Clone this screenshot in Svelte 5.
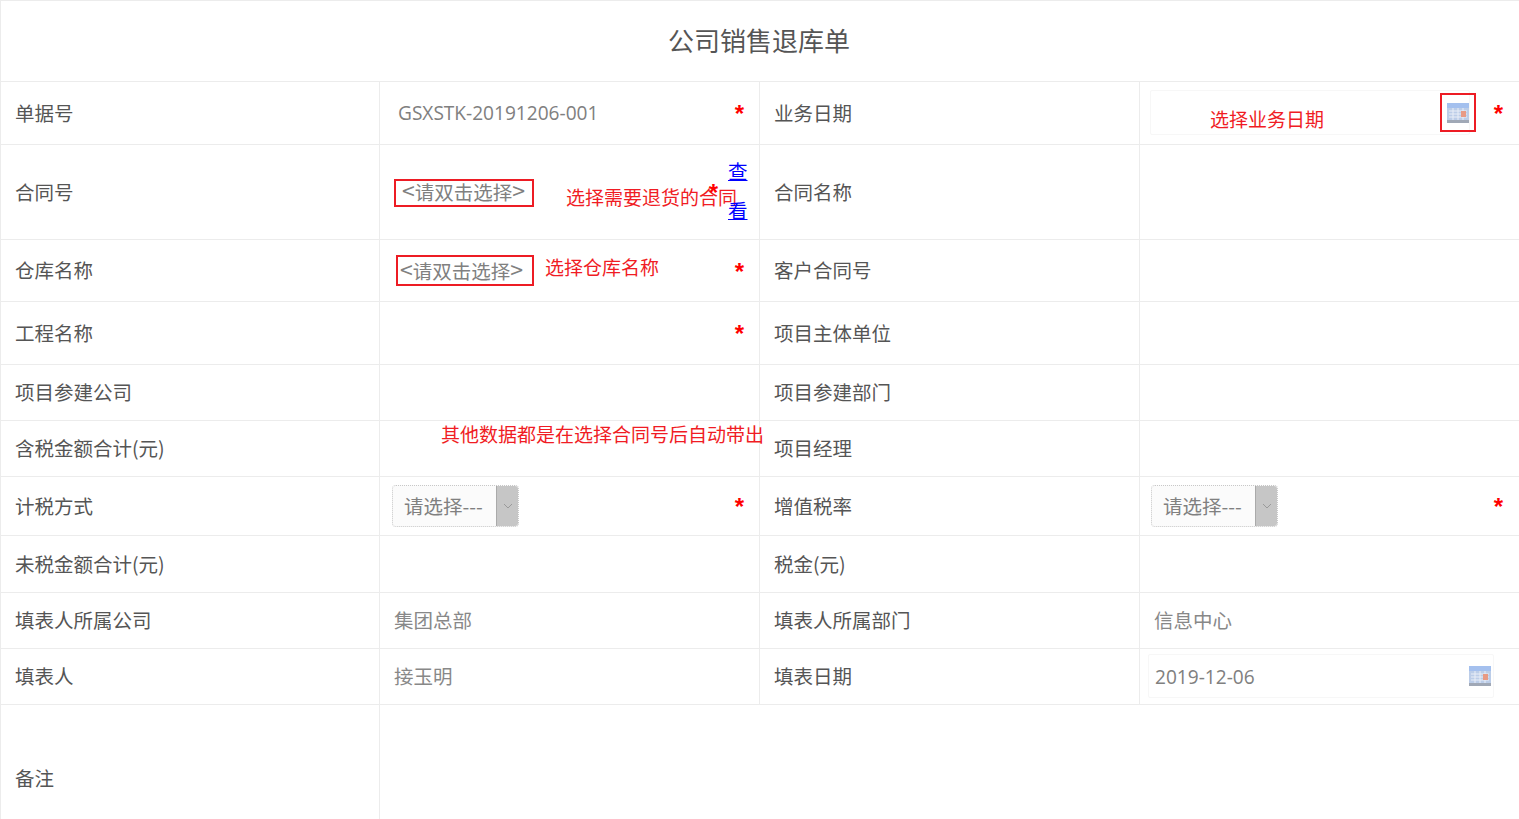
<script>
</script>

{#snippet calendar()}
  <svg class="cal" width="24" height="22" viewBox="0 0 24 22">
    <rect x="1" y="1" width="22" height="20" rx="1" fill="#bccde8" />
    <rect x="1" y="1" width="22" height="5" fill="#a4c0ee" />
    <rect x="1" y="18" width="22" height="3" fill="#a0a8b6" />
    <path d="M3 9h18M3 12h18M3 15h18M7 6v12M12 6v12M17 6v12" stroke="#e9eef7" stroke-width="1" />
    <rect x="15" y="9" width="5" height="6" fill="#e89a85" />
  </svg>
{/snippet}

{#snippet star(cls = "")}
  <span class="star {cls}">*</span>
{/snippet}

{#snippet select(alt)}
  <div class="select" class:alt>
    <span class="select-text">请选择---</span>
    <span class="select-btn">
      <svg width="10" height="6" viewBox="0 0 10 6"><path d="M1 1l4 4 4-4" fill="none" stroke="#9a9a9a" /></svg>
    </span>
  </div>
{/snippet}

{#snippet pickText()}
  <span class="br">&lt;</span>请双击选择<span class="br">&gt;</span>
{/snippet}

<div class="page">
  <table>
    <colgroup>
      <col class="c1" /><col class="c2" /><col class="c3" /><col class="c4" />
    </colgroup>
    <tbody>
      <tr class="r-title"><th colspan="4">公司销售退库单</th></tr>

      <tr class="r63">
        <td class="lbl">单据号</td>
        <td class="val"><span class="code">GSXSTK-20191206-001</span>{@render star()}</td>
        <td class="lbl">业务日期</td>
        <td class="val">
          <div class="date-box first"></div>
          <span class="note n-date">选择业务日期</span>
          <span class="cal-mark">{@render calendar()}</span>
          {@render star("far")}
        </td>
      </tr>

      <tr class="r95">
        <td class="lbl">合同号</td>
        <td class="val">
          <span class="pick pick-a">{@render pickText()}</span>
          <span class="note n-contract">选择需要退货的合同</span>
          {@render star("star-contract")}
          <a class="view" href="#view">查<br />看</a>
        </td>
        <td class="lbl">合同名称</td>
        <td></td>
      </tr>

      <tr class="r62">
        <td class="lbl">仓库名称</td>
        <td class="val">
          <span class="pick pick-b">{@render pickText()}</span>
          <span class="note n-store">选择仓库名称</span>
          {@render star()}
        </td>
        <td class="lbl">客户合同号</td>
        <td></td>
      </tr>

      <tr class="r63">
        <td class="lbl">工程名称</td>
        <td class="val">{@render star()}</td>
        <td class="lbl">项目主体单位</td>
        <td></td>
      </tr>

      <tr class="r56">
        <td class="lbl">项目参建公司</td>
        <td></td>
        <td class="lbl">项目参建部门</td>
        <td></td>
      </tr>

      <tr class="r56">
        <td class="lbl">含税金额合计(元)</td>
        <td class="val"><span class="note n-other">其他数据都是在选择合同号后自动带出</span></td>
        <td class="lbl">项目经理</td>
        <td></td>
      </tr>

      <tr class="r59">
        <td class="lbl">计税方式</td>
        <td class="val">{@render select(false)}{@render star("low")}</td>
        <td class="lbl">增值税率</td>
        <td class="val">{@render select(true)}{@render star("low far")}</td>
      </tr>

      <tr class="r57">
        <td class="lbl">未税金额合计(元)</td>
        <td></td>
        <td class="lbl">税金(元)</td>
        <td></td>
      </tr>

      <tr class="r56">
        <td class="lbl">填表人所属公司</td>
        <td class="ro">集团总部</td>
        <td class="lbl">填表人所属部门</td>
        <td class="ro">信息中心</td>
      </tr>

      <tr class="r56">
        <td class="lbl">填表人</td>
        <td class="ro">接玉明</td>
        <td class="lbl">填表日期</td>
        <td class="val">
          <div class="date-box second"><span class="code">2019-12-06</span>{@render calendar()}</div>
        </td>
      </tr>

      <tr class="r-note">
        <td class="lbl">备注</td>
        <td colspan="3"></td>
      </tr>
    </tbody>
  </table>
</div>

<style>
  :global(body) { background: #fff; overflow: hidden; }
  .page { width: 1519px; height: 819px; overflow: hidden; }
  table {
    width: 1519px;
    table-layout: fixed;
    border-collapse: collapse;
    font-family: "Noto Sans CJK SC", "Open Sans", sans-serif;
    font-size: 19.5px;
    color: #555;
  }
  .c1 { width: 379px; }
  .c2 { width: 380px; }
  .c3 { width: 380px; }
  .c4 { width: 380px; }
  th, td { border: 1px solid #ececec; padding: 0; }
  th { font-size: 26px; font-weight: 400; color: #555; text-align: center; padding: 0 2px 4px 0; }
  .r-title { height: 81px; }
  .r95 { height: 95px; }
  .r63 { height: 63px; }
  .r62 { height: 62px; }
  .r59 { height: 59px; }
  .r57 { height: 57px; }
  .r56 { height: 56px; }
  .r-note { height: 148px; }

  .lbl { padding: 0 14px 2px; vertical-align: middle; }
  .val { position: relative; padding-bottom: 3px; }
  .ro { padding: 0 0 2px 14px; color: #888; }
  .code { font-family: "Open Sans", "Noto Sans CJK SC", sans-serif; font-size: 19.1px; color: #808080; }
  .val > .code { margin-left: 18px; }

  .star {
    position: absolute;
    top: 20px;
    right: 15px;
    color: #f00;
    font: 700 24px/1 "Liberation Sans", sans-serif;
  }
  .star.far { right: 16px; }
  .star.low { top: 18px; }
  .star.star-contract { top: 36px; right: 41px; }

  .note {
    position: absolute;
    color: #f01c24;
    font-size: 19px;
    line-height: 26px;
    white-space: nowrap;
  }
  .n-date { left: 70px; top: 24px; }
  .n-contract { left: 186px; top: 39px; }
  .n-store { left: 165px; top: 14px; }
  .n-other { left: 61px; top: 0; }

  .pick {
    position: absolute;
    box-sizing: border-box;
    border: 2px solid #ed1c24;
    color: #808080;
    white-space: nowrap;
  }
  .br { font-size: 23px; line-height: 0; }
  .pick-a { left: 14px; top: 34px; width: 140px; height: 28px; padding-left: 6px; line-height: 22px; }
  .pick-b { left: 16px; top: 15px; width: 138px; height: 31px; padding-left: 2px; line-height: 27px; }

  .view {
    position: absolute;
    left: 348px;
    top: 6px;
    width: 20px;
    color: #00f;
    line-height: 39px;
    text-decoration: underline;
  }

  .date-box {
    position: absolute;
    box-sizing: border-box;
    border: 1px solid #f7f7f7;
    border-radius: 2px;
  }
  .first { left: 10px; top: 8px; width: 320px; height: 45px; }
  .second {
    left: 8px;
    top: 5px;
    width: 346px;
    height: 44px;
    display: flex;
    align-items: center;
    justify-content: space-between;
    padding: 0 1px 0 6px;
  }
  .second .code { margin-top: 2px; }
  .cal { display: block; filter: blur(0.6px); }
  .cal-mark {
    position: absolute;
    left: 300px;
    top: 11px;
    width: 36px;
    height: 39px;
    box-sizing: border-box;
    border: 2px solid #ed1c24;
    display: flex;
    align-items: center;
    justify-content: center;
  }

  .select {
    position: absolute;
    left: 12px;
    top: 8px;
    width: 127px;
    height: 42px;
    box-sizing: border-box;
    border: 1px dotted #c8c8c8;
    border-radius: 4px;
    background: #fbfbfb;
    display: flex;
    overflow: hidden;
  }
  .select.alt { left: 11px; }
  .select-text { flex: 1; padding-left: 11px; line-height: 40px; color: #808080; }
  .select-btn {
    width: 21px;
    background: #c6c6c6;
    border-left: 1px solid #aaa;
    display: flex;
    align-items: center;
    justify-content: center;
  }
</style>
